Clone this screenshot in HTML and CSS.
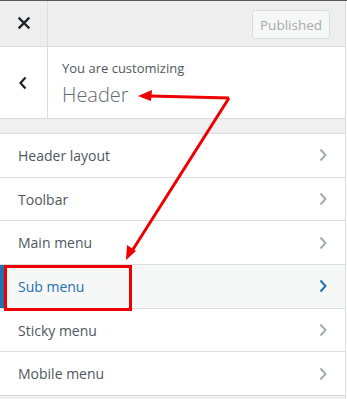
FILE: index.html
```html
<!DOCTYPE html>
<html>
<head>
<meta charset="utf-8">
<link rel="stylesheet" href="styles.css">
</head>
<body>
<div class="panel">
  <div class="topbar">
    <div class="close">
      <svg width="14" height="14" viewBox="0 0 14 14"><path d="M2.5 2.5 L11.5 11.5 M11.5 2.5 L2.5 11.5" stroke="#1d2327" stroke-width="2.4" stroke-linecap="square"/></svg>
    </div>
    <div class="topfill">
      <button class="published">Published</button>
    </div>
  </div>
  <div class="info">
    <div class="back">
      <svg width="10" height="14" viewBox="0 0 10 14"><path d="M7.5 1.5 L2.5 7 L7.5 12.5" fill="none" stroke="#1d2327" stroke-width="2.2"/></svg>
    </div>
    <div class="title">
      <div class="sub">You are customizing</div>
      <div class="main">Header</div>
    </div>
  </div>
  <div class="band"></div>
  <ul class="list">
    <li class="row"><span>Header layout</span><svg class="chev" width="10" height="14" viewBox="0 0 10 14"><path d="M2.5 1.5 L7.5 7 L2.5 12.5" fill="none" stroke-width="2"/></svg></li>
    <li class="row"><span>Toolbar</span><svg class="chev" width="10" height="14" viewBox="0 0 10 14"><path d="M2.5 1.5 L7.5 7 L2.5 12.5" fill="none" stroke-width="2"/></svg></li>
    <li class="row"><span>Main menu</span><svg class="chev" width="10" height="14" viewBox="0 0 10 14"><path d="M2.5 1.5 L7.5 7 L2.5 12.5" fill="none" stroke-width="2"/></svg></li>
    <li class="row active"><span>Sub menu</span><svg class="chev" width="10" height="14" viewBox="0 0 10 14"><path d="M2.5 1.5 L7.5 7 L2.5 12.5" fill="none" stroke-width="2"/></svg></li>
    <li class="row"><span>Sticky menu</span><svg class="chev" width="10" height="14" viewBox="0 0 10 14"><path d="M2.5 1.5 L7.5 7 L2.5 12.5" fill="none" stroke-width="2"/></svg></li>
    <li class="row"><span>Mobile menu</span><svg class="chev" width="10" height="14" viewBox="0 0 10 14"><path d="M2.5 1.5 L7.5 7 L2.5 12.5" fill="none" stroke-width="2"/></svg></li>
  </ul>
</div>
<div class="highlight"></div>
<svg class="arrows" width="347" height="399" viewBox="0 0 347 399">
  <path d="M229 97 L150 95" stroke="#ee0000" stroke-width="3" fill="none"/>
  <path d="M138 95 L152 89 L151 100 Z" fill="#ee0000"/>
  <path d="M229 97 L132 250" stroke="#ee0000" stroke-width="3" fill="none"/>
  <path d="M126 259 L127 244 L136 250 Z" fill="#ee0000"/>
</svg>
</body>
</html>
```
FILE: styles.css
```css
* { box-sizing: border-box; }
html, body { margin: 0; padding: 0; }
body {
  width: 347px;
  height: 399px;
  background: #fff;
  border-top: 1px solid #5a5a5a;
  font-family: "Open Sans", "Segoe UI", sans-serif;
  position: relative;
  overflow: hidden;
}
.panel {
  width: 346px;
  border-right: 1px solid #dcdcde;
  background: #f0f0f1;
  height: 398px;
}
.topbar {
  display: flex;
  height: 46px;
  background: #eeeeee;
  border-bottom: 1px solid #dcdcde;
}
.close {
  width: 48px;
  border-right: 1px solid #dcdcde;
  display: flex;
  align-items: center;
  justify-content: center;
  padding-bottom: 1px;
}
.topfill {
  flex: 1;
  display: flex;
  align-items: center;
  justify-content: flex-end;
  padding-right: 15px;
  padding-top: 2px;
}
.published {
  width: 78px;
  height: 29px;
  border: 1px solid #dcdcde;
  border-radius: 3px;
  background: #f6f7f7;
  color: #a7aaad;
  font-family: "Open Sans", sans-serif;
  font-size: 13.5px;
  padding: 0;
}
.info {
  display: flex;
  height: 72px;
  background: #fff;
  border-bottom: 1px solid #dcdcde;
}
.back {
  width: 48px;
  border-right: 1px solid #dcdcde;
  display: flex;
  align-items: center;
  justify-content: center;
  padding-right: 1px;
}
.title {
  padding: 11px 0 0 14px;
}
.sub {
  font-size: 13px;
  color: #50575e;
  line-height: 20px;
}
.main {
  font-size: 20px;
  font-weight: 300;
  color: #646970;
  line-height: 28px;
  margin-top: 3px;
}
.band {
  height: 15px;
  background: #f0f0f1;
  border-bottom: 1px solid #dcdcde;
}
.list {
  list-style: none;
  margin: 0;
  padding: 0;
}
.row {
  height: 43.7px;
  background: #fff;
  border-bottom: 1px solid #dcdcde;
  display: flex;
  align-items: center;
  justify-content: space-between;
  padding: 0 17px 0 18px;
  font-size: 14px;
  color: #50575e;
  font-weight: 500;
}
.chev { stroke: #a7aaad; }
.row.active {
  background: #f6f7f7;
  color: #2271b1;
  box-shadow: inset 4px 0 0 #2271b1;
}
.row.active .chev { stroke: #2271b1; }
.highlight {
  position: absolute;
  left: 4px;
  top: 264px;
  width: 128px;
  height: 46px;
  border: 3px solid #ee0000;
}
.arrows {
  position: absolute;
  left: 0;
  top: 0;
}
```
